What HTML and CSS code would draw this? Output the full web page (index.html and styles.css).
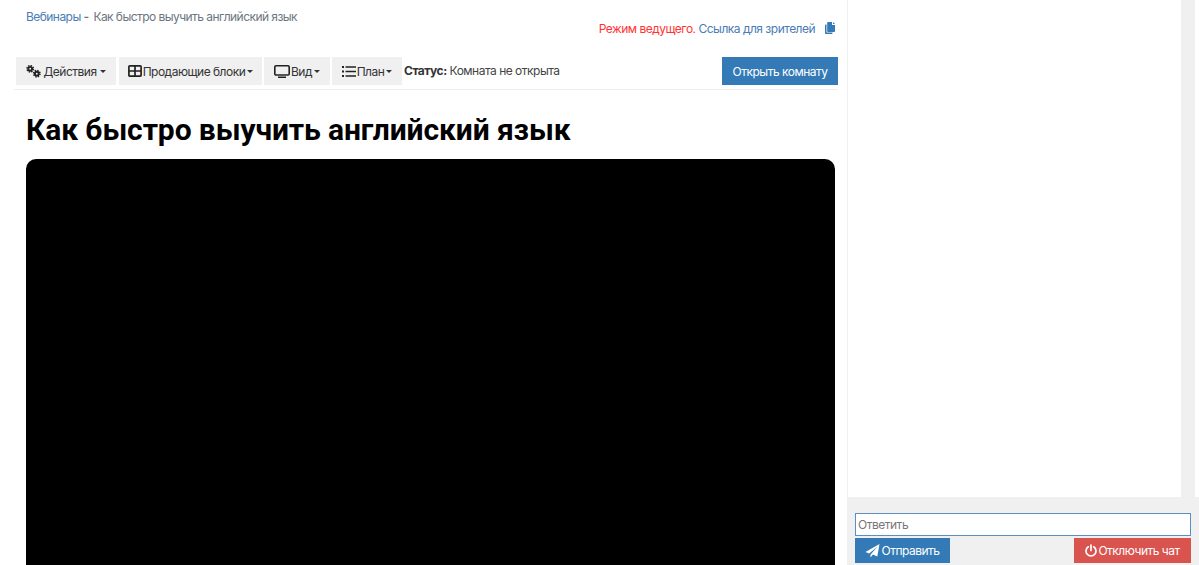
FILE: index.html
```html
<!DOCTYPE html>
<html lang="ru">
<head>
<meta charset="UTF-8" />
<meta name="viewport" content="width=device-width, initial-scale=1" />
<title>Как быстро выучить английский язык</title>
<link rel="stylesheet" href="styles.css">
</head>
<body>

<div class="room">
  <div class="main">
    <div class="head">
      <div class="crumbs"><a href="#">Вебинары</a> <b>-</b> <span>Как быстро выучить английский язык</span></div>
      <div class="links">
        <span class="mode">Режим ведущего.</span> <a href="#">Ссылка для зрителей</a>
        <svg class="copy" viewBox="0 0 12 12" width="12" height="12"><path fill="#337ab7" d="M4 0h4v3h3v6.200a.8.8 0 0 1-.8.8H4a.8.8 0 0 1-.8-.8V.8A.8.8 0 0 1 4 0zM9 0l2 2H9zM1.800 2.500H2.500v8h6v.7a.8.8 0 0 1-.8.8H1.800a.8.8 0 0 1-.8-.8V3.300a.8.8 0 0 1 .8-.8z"/></svg>
      </div>
    </div>

    <div class="toolbar">
      <button class="tool tool-first">
        <svg viewBox="0 0 15 13" width="15" height="13"><g fill="none" stroke="#222"><circle cx="4.200" cy="3.800" r="1.900" stroke-width="1.900"/><circle cx="4.200" cy="3.800" r="3.200" stroke-width="1.500" stroke-dasharray="1.400 1.113"/><circle cx="10.800" cy="8.700" r="1.900" stroke-width="1.900"/><circle cx="10.800" cy="8.700" r="3.200" stroke-width="1.500" stroke-dasharray="1.400 1.113"/></g></svg>
        Действия <i class="caret"></i>
      </button>
      <button class="tool tool-blocks">
        <svg viewBox="0 0 14 12" width="14" height="12"><path fill="none" stroke="#222" stroke-width="1.700" d="M1.800.9h10.400a.9.9 0 0 1 .9.900v8.400a.9.9 0 0 1-.9.9H1.800a.9.9 0 0 1-.9-.9V1.800a.9.9 0 0 1 .9-.9zM7 .9v10.200M.9 6h12.200"/></svg>
        Продающие блоки<i class="caret"></i>
      </button>
      <button class="tool tool-view">
        <svg viewBox="0 0 16 13" width="16" height="13"><path fill="none" stroke="#222" stroke-width="1.600" d="M2 .8h12a1.200 1.200 0 0 1 1.200 1.200v6.800a1.200 1.200 0 0 1-1.200 1.200H2a1.200 1.200 0 0 1-1.200-1.200V2A1.200 1.200 0 0 1 2 .8z"/><path fill="#222" d="M4 11.500h8V13H4z"/></svg>
        Вид<i class="caret"></i>
      </button>
      <button class="tool tool-plan">
        <svg viewBox="0 0 14 11" width="14" height="11"><path fill="#222" d="M0 0h2v2H0zM0 4.500h2v2H0zM0 9h2v2H0zM3.500 .2H14v1.600H3.500zM3.500 4.700H14v1.600H3.500zM3.500 9.200H14v1.600H3.500z"/></svg>
        План<i class="caret"></i>
      </button>
      <div class="status"><b>Статус:</b> Комната не открыта</div>
      <button class="open-btn">Открыть комнату</button>
    </div>

    <div class="content">
      <h1>Как быстро выучить английский язык</h1>
      <div class="video"></div>
    </div>
  </div>

  <div class="side">
    <div class="messages"></div>
    <div class="reply">
      <input type="text" placeholder="Ответить" />
      <div class="reply-btns">
        <button class="send">
          <svg viewBox="0 0 14 14" width="15" height="14"><path fill="#fff" d="M14 0 11.800 12.400 7.400 10.500 5 13.500V10.700L12 2.500 3.700 9.600 0 8z"/></svg>
          Отправить
        </button>
        <button class="off">
          <svg viewBox="0 0 12 13" width="12" height="13"><path fill="none" stroke="#fff" stroke-width="1.700" stroke-linecap="round" d="M6 1v5.500M3.300 2.800a5 5 0 1 0 5.400 0"/></svg>
          Отключить чат
        </button>
      </div>
    </div>
  </div>
</div>

</body>
</html>
```

FILE: styles.css
```css
html, body {
  height: 100%;
}

body {
  margin: 0;
  background-color: #fff;
  color: #333;
  font-family: Inter, 'Noto Sans', sans-serif;
  font-size: 12px;
  letter-spacing: -0.5px;
  overflow: hidden;
}

a {
  color: #4a7cb5;
  text-decoration: none;
}

button {
  font-family: inherit;
  letter-spacing: inherit;
  border: none;
  cursor: pointer;
}

.room {
  display: flex;
  height: 565px;
  overflow: hidden;
}

.main {
  width: 847px;
  flex: none;
  padding: 0 9px 0 14px;
  box-sizing: border-box;
}

.head {
  height: 57px;
  display: flex;
  justify-content: space-between;
  padding: 10px 0 0 12px;
  box-sizing: border-box;
}

.crumbs {
  color: #6b7680;
  line-height: 14px;
  letter-spacing: -0.55px;
}

.crumbs b {
  font-weight: 600;
  margin: 0 2px 0 0;
}

.links {
  padding: 12px 2px 0 0;
  line-height: 14px;
}

.mode {
  color: #f33;
}

.copy {
  margin-left: 6px;
  vertical-align: -1px;
}

.toolbar {
  display: flex;
  align-items: flex-start;
  height: 33px;
  border-bottom: 1px solid #eee;
  padding-left: 2px;
  gap: 2px;
  box-sizing: border-box;
}

.tool {
  height: 28px;
  display: flex;
  align-items: center;
  justify-content: center;
  background-color: #f0f0f0;
  color: #333;
  font-size: 12px;
  padding: 0;
}

.tool-first { width: 100px; gap: 2px; margin-right: 1px; }
.tool-blocks { width: 143px; gap: 1px; }
.tool-view { width: 66px; gap: 1px; }
.tool-plan { width: 70px; gap: 1px; }

.caret {
  display: inline-block;
  width: 0;
  height: 0;
  margin-left: 1px;
  border-top: 3px solid #333;
  border-left: 3.500px solid transparent;
  border-right: 3.500px solid transparent;
}

.status {
  line-height: 28px;
  color: #444;
}

.status b {
  font-weight: 700;
  color: #333;
}

.open-btn {
  margin-left: auto;
  width: 116px;
  height: 28px;
  background-color: #337ab7;
  color: #fff;
  font-size: 12px;
}

.content {
  padding: 0 3px 0 12px;
}

h1 {
  margin: 0;
  padding-top: 21px;
  color: #000;
  font-family: Roboto, sans-serif;
  font-size: 30px;
  line-height: 38px;
  font-weight: 700;
  letter-spacing: -0.1px;
}

.video {
  margin-top: 10px;
  height: 420px;
  background-color: #000;
  border-radius: 10px;
}

.side {
  flex: 1;
  display: flex;
  flex-direction: column;
  border-left: 1px solid #f0f0f0;
}

.messages {
  flex: 1;
  margin-right: 4px;
  border-right: 14px solid #f0f0f0;
}

.reply {
  height: 68px;
  padding: 16px 8px 0 7px;
  background-color: #f0f0f0;
  box-sizing: border-box;
}

.reply input {
  display: block;
  width: 100%;
  height: 23px;
  padding: 0 2px;
  border: 1px solid #5b8fc2;
  background-color: #fff;
  font-family: inherit;
  letter-spacing: inherit;
  font-size: 12px;
  box-sizing: border-box;
}

.reply input::placeholder {
  color: #777;
}

.reply-btns {
  display: flex;
  justify-content: space-between;
  margin-top: 2px;
}

.reply-btns button {
  height: 25px;
  display: flex;
  align-items: center;
  justify-content: center;
  gap: 1px;
  color: #fff;
  font-size: 12px;
  padding: 0;
}

.send {
  width: 95px;
  background-color: #337ab7;
}

.off {
  width: 117px;
  background-color: #d9534f;
}
```
